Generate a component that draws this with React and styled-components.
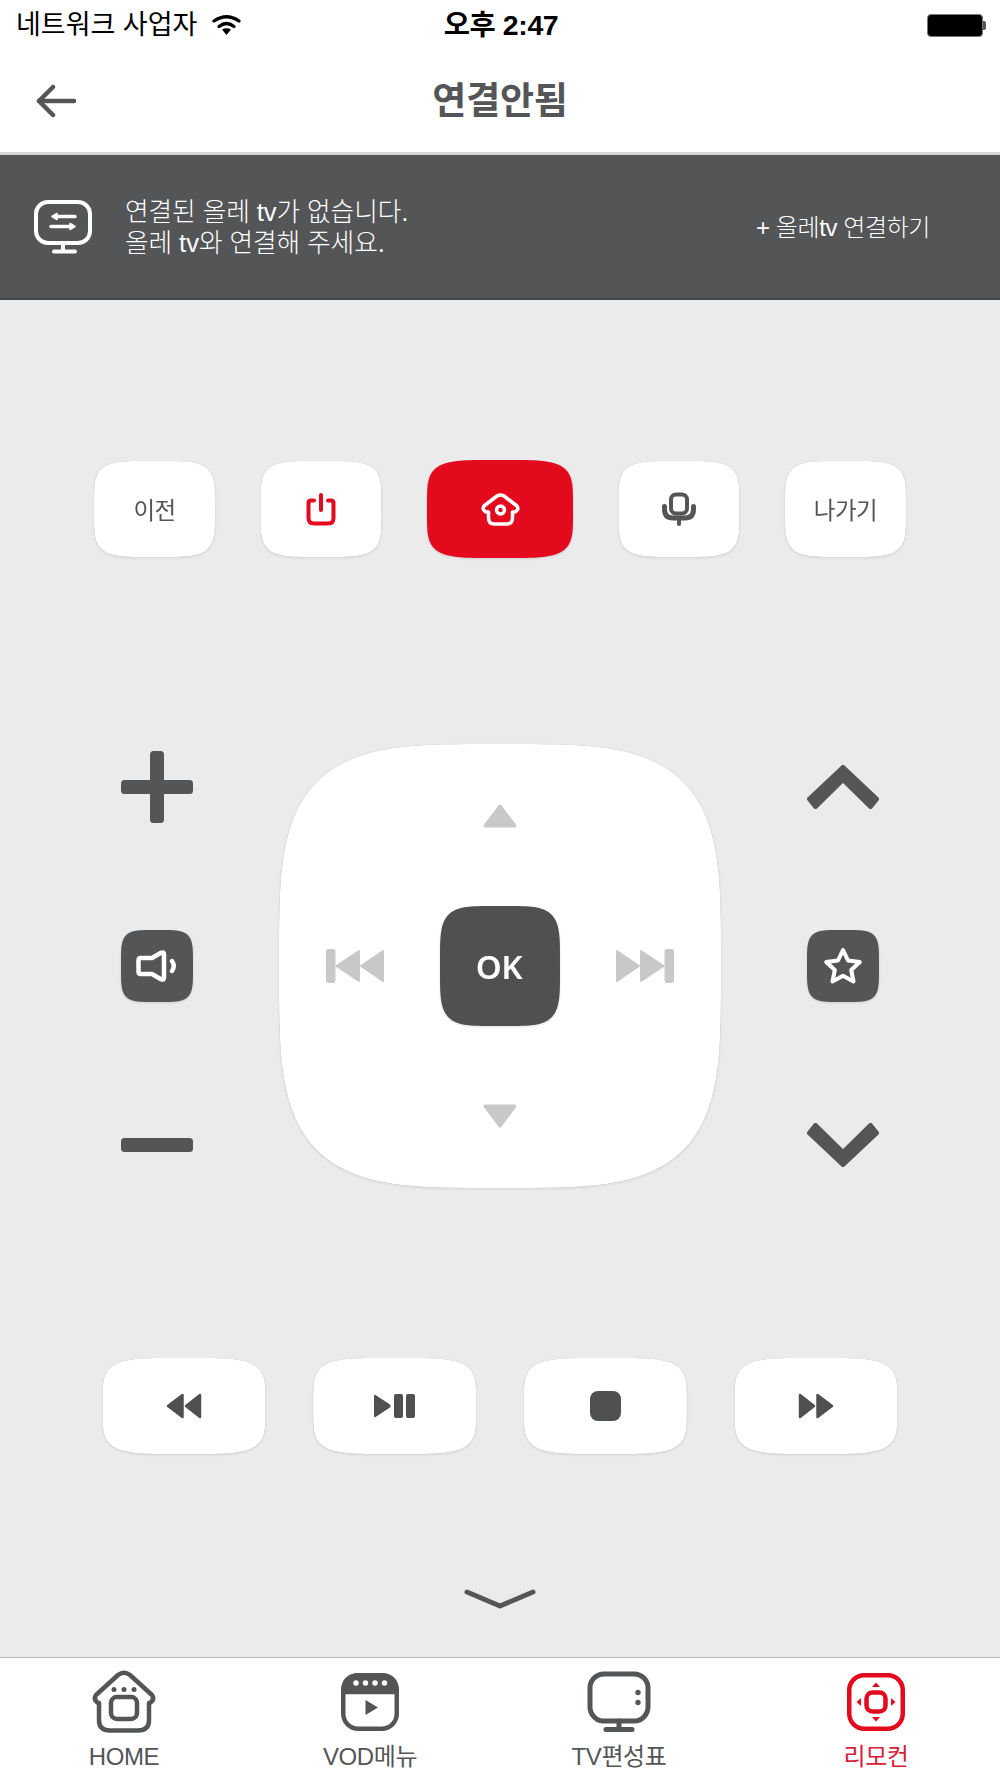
import React from 'react';
import styled, { createGlobalStyle } from 'styled-components';

const DARK = '#545557';
const RED = '#e30a1e';
const GRAY = '#c7c8ca';

const GlobalStyle = createGlobalStyle`
  html, body {
    margin: 0;
    padding: 0;
    background: #ebebeb;
  }
  body {
    font-family: "Liberation Sans", "Noto Sans CJK KR", sans-serif;
  }
`;

// superellipse outline, used as the clip of every soft-cornered key
const squirclePath = (w, h, n) => {
  const points = [];
  for (let i = 0; i < 240; i++) {
    const t = (i / 240) * Math.PI * 2;
    const c = Math.cos(t);
    const s = Math.sin(t);
    const x = w / 2 + (w / 2) * Math.sign(c) * Math.pow(Math.abs(c), 2 / n);
    const y = h / 2 + (h / 2) * Math.sign(s) * Math.pow(Math.abs(s), 2 / n);
    points.push(`${x.toFixed(2)} ${y.toFixed(2)}`);
  }
  return `M${points.join('L')}Z`;
};

const Page = styled.div`
  width: 1000px;
  height: 1778px;
  display: flex;
  flex-direction: column;
  overflow: hidden;
  background: #ebebeb;
`;

const StatusBar = styled.div`
  height: 50px;
  flex: none;
  display: grid;
  grid-template-columns: 1fr auto 1fr;
  align-items: center;
  padding: 0 14px 0 16px;
  background: #fff;
  color: #000;
`;

const Carrier = styled.div`
  display: flex;
  align-items: center;
  gap: 15px;
  font-size: 27px;
  line-height: 32px;
  margin-bottom: 1px;
`;

const Clock = styled.div`
  font-size: 28.5px;
  line-height: 32px;
  font-weight: 700;
  letter-spacing: -0.4px;
  margin-bottom: 1px;
`;

const Battery = styled.div`
  justify-self: end;
  display: flex;
  align-items: center;
`;

const BatteryBody = styled.div`
  width: 54px;
  height: 21px;
  background: #000;
  border: 1.5px solid #777;
  border-radius: 4px;
`;

const BatteryTip = styled.div`
  width: 3px;
  height: 9px;
  background: #555;
  border-radius: 0 2px 2px 0;
`;

const Header = styled.header`
  height: 105px;
  flex: none;
  position: relative;
  display: flex;
  align-items: center;
  justify-content: center;
  box-sizing: border-box;
  padding-bottom: 6px;
  background: #fff;
  border-bottom: 3px solid #d6d6d6;
`;

const BackButton = styled.div`
  position: absolute;
  left: 36px;
  top: 34px;
  line-height: 0;
`;

const Title = styled.h1`
  margin: 0;
  font-size: 37px;
  font-weight: 700;
  color: ${DARK};
  letter-spacing: -0.2px;
`;

const Banner = styled.section`
  height: 145px;
  flex: none;
  box-sizing: border-box;
  display: flex;
  align-items: center;
  padding: 0 70px 0 34px;
  background: ${DARK};
  border-bottom: 2px solid #434446;
  color: #fff;
`;

const BannerMessage = styled.div`
  margin-left: 33px;
  padding-top: 2px;
  font-size: 25.7px;
  line-height: 31px;
  font-weight: 300;
  letter-spacing: -0.1px;
`;

const ConnectLink = styled.div`
  margin-left: auto;
  margin-bottom: 2px;
  font-size: 24px;
  font-weight: 300;
  letter-spacing: -0.4px;
`;

const Main = styled.main`
  flex: 1;
  display: flex;
  flex-direction: column;
  align-items: center;
  padding-top: 160px;
  background: #ebebeb;
`;

const TopRow = styled.div`
  display: flex;
  align-items: center;
  justify-content: center;
  gap: 45.5px;
`;

const Raised = styled.div`
  flex: none;
  filter: ${(p) =>
    p.$outline
      ? 'drop-shadow(0 0 0.7px rgba(0,0,0,.3)) drop-shadow(0 1px 1px rgba(0,0,0,.1))'
      : 'drop-shadow(0 1px 1px rgba(0,0,0,.12))'};
`;

const Face = styled.button`
  display: flex;
  align-items: center;
  justify-content: center;
  width: ${(p) => p.$w}px;
  height: ${(p) => p.$h}px;
  padding: 0;
  border: 0;
  background: ${(p) => p.$bg};
  color: ${(p) => p.$fg};
  font-family: inherit;
  clip-path: path('${(p) => squirclePath(p.$w, p.$h, p.$n)}');
`;

const KeyLabel = styled.span`
  font-size: 23.5px;
  letter-spacing: -0.5px;
`;

const OkLabel = styled.span`
  font-family: "Noto Sans", sans-serif;
  font-size: 33px;
  font-weight: 600;
  letter-spacing: -0.5px;
  margin-right: 2px;
`;

const Key = ({ w, h, n = 4.5, bg = '#fff', fg = DARK, children }) => (
  <Raised $outline={bg === '#fff'}>
    <Face $w={w} $h={h} $n={n} $bg={bg} $fg={fg}>
      {children}
    </Face>
  </Raised>
);

const Middle = styled.div`
  margin-top: 186px;
  display: grid;
  grid-template-columns: 72px 442px 72px;
  column-gap: 86px;
  height: 444px;
`;

const SideColumn = styled.div`
  display: flex;
  flex-direction: column;
  justify-content: space-between;
  padding: 7px 0;
`;

const SideCell = styled.div`
  width: 72px;
  height: 72px;
  display: flex;
  align-items: center;
  justify-content: center;
`;

const PadGrid = styled.div`
  display: grid;
  width: 100%;
  height: 100%;
  grid-template-columns: 1fr 120px 1fr;
  grid-template-rows: 1fr 120px 1fr;
`;

const PadArrow = styled.div`
  grid-column: 2;
  grid-row: ${(p) => (p.$down ? 3 : 1)};
  justify-self: center;
  align-self: ${(p) => (p.$down ? 'start' : 'end')};
  margin: ${(p) => (p.$down ? '78px 0 0' : '0 0 78px')};
  line-height: 0;
`;

const PadSkip = styled.div`
  grid-row: 2;
  grid-column: ${(p) => (p.$next ? 3 : 1)};
  align-self: center;
  justify-self: ${(p) => (p.$next ? 'start' : 'end')};
  margin: ${(p) => (p.$next ? '0 0 0 56px' : '0 56px 0 0')};
  line-height: 0;
`;

const PadCenter = styled.div`
  grid-row: 2;
  grid-column: 2;
`;

const MediaRow = styled.div`
  margin-top: 170px;
  display: flex;
  gap: 47.67px;
`;

const Collapse = styled.div`
  margin-top: 135px;
  line-height: 0;
`;

const TabBar = styled.nav`
  height: 121px;
  flex: none;
  box-sizing: border-box;
  display: grid;
  grid-template-columns: 248px 244px 254px 254px;
  padding-top: 12px;
  background: #fff;
  border-top: 1px solid #b9b9b9;
`;

const Tab = styled.div`
  display: flex;
  flex-direction: column;
  align-items: center;
  color: ${(p) => (p.$active ? '#d8223a' : DARK)};
  &:last-child {
    padding-left: 6px;
  }
`;

const TabIcon = styled.div`
  height: 64px;
  display: flex;
  align-items: center;
  justify-content: center;
`;

const TabLabel = styled.div`
  margin-top: 9px;
  font-size: 24px;
  line-height: 28px;
  letter-spacing: -0.4px;
`;

// ---- drawings ----

const WifiIcon = () => (
  <svg width="29" height="22" viewBox="0 0 29 22" fill="none" stroke="#000" strokeWidth="3.2" strokeLinecap="round">
    <path d="M2 7Q14.500-1.500 27 7" />
    <path d="M7 12.500Q14.500 6.500 22 12.500" />
    <path d="M10 15.500Q14.500 13 19 15.500L14.500 21Z" fill="#000" stroke="none" />
  </svg>
);

const BackIcon = () => (
  <svg width="40" height="34" viewBox="0 0 40 34" fill="none" stroke={DARK} strokeWidth="4.5" strokeLinecap="round" strokeLinejoin="round">
    <path d="M3 17H38" />
    <path d="M17 3L3 17L17 31" />
  </svg>
);

const LinkTvIcon = () => (
  <svg width="58" height="54" viewBox="0 0 58 54" fill="none" stroke="#fff" strokeWidth="4" strokeLinecap="round">
    <rect x="2" y="2" width="54" height="41" rx="12" />
    <path d="M29 44V51" />
    <path d="M20 51.500H41" />
    <path d="M20 16.500H41" strokeWidth="3.500" />
    <path d="M18 16.500L23 13.500V19.500Z" fill="#fff" strokeWidth="1.500" strokeLinejoin="round" />
    <path d="M17 26.500H38" strokeWidth="3.500" />
    <path d="M41 26.500L36 23.500V29.500Z" fill="#fff" strokeWidth="1.500" strokeLinejoin="round" />
  </svg>
);

const PowerIcon = () => (
  <svg width="30" height="33" viewBox="0 0 30 33" fill="none" stroke={RED} strokeWidth="4" strokeLinecap="round">
    <path d="M8 7.500H5Q2.500 7.500 2.500 10V25Q2.500 30.500 8 30.500H22Q27.500 30.500 27.500 25V10Q27.500 7.500 25 7.500H22" />
    <path d="M15 2V17" />
  </svg>
);

const HomeKeyIcon = () => (
  <svg width="41" height="33" viewBox="0 0 41 33" fill="none" stroke="#fff" strokeWidth="3.500" strokeLinejoin="round">
    <path d="M8.500 19V25Q8.500 31 14.500 31H26.500Q32.500 31 32.500 25V19H35Q39.500 16.500 37 13L24 3Q20.500 0.800 17 3L4 13Q1.500 16.500 6 19Z" />
    <circle cx="20.500" cy="17" r="4" strokeWidth="3.500" />
  </svg>
);

const MicIcon = () => (
  <svg width="34" height="34" viewBox="0 0 34 34" fill="none" stroke={DARK} strokeWidth="4" strokeLinecap="round">
    <rect x="9" y="2.500" width="16" height="19" rx="5" />
    <path d="M2.500 14.500V17Q2.500 26 11 26H23Q31.500 26 31.500 17V14.500" strokeWidth="5" />
    <path d="M17 27V32" />
  </svg>
);

const PlusIcon = () => (
  <svg width="72" height="72" viewBox="0 0 72 72" fill={DARK}>
    <rect x="0" y="29" width="72" height="14" rx="3.500" />
    <rect x="29" y="0" width="14" height="72" rx="3.500" />
  </svg>
);

const MinusIcon = () => (
  <svg width="72" height="14" viewBox="0 0 72 14" fill={DARK}>
    <rect width="72" height="14" rx="3.500" />
  </svg>
);

const ChevronIcon = ({ down }) => (
  <svg width="72" height="44" viewBox="0 0 72 44" fill={DARK} stroke={DARK} strokeWidth="5" strokeLinejoin="round">
    <g transform={down ? 'translate(0 44) scale(1 -1)' : undefined}>
      <path d="M36 2.500L69.500 34L63.500 41.500L36 14.500L8.500 41.500L2.500 34Z" />
    </g>
  </svg>
);

const SpeakerIcon = () => (
  <svg width="42" height="32" viewBox="0 0 42 32" fill="none" stroke="#fff" strokeWidth="4.5" strokeLinejoin="round" strokeLinecap="round">
    <path d="M4.500 8H16L25 2.800Q28 1.500 28 4.500V27.500Q28 30.500 25 29.200L16 24H4.500Q2.500 24 2.500 21.500V10.500Q2.500 8 4.500 8Z" />
    <path d="M36 11Q39.500 16 36 21" strokeWidth="4.5" />
  </svg>
);

const StarIcon = () => (
  <svg width="40" height="38" viewBox="0 0 40 38" fill="none" stroke="#fff" strokeWidth="4" strokeLinejoin="round">
    <path d="M20 3L25 13.500L36.800 15L28.200 23L30.500 34.500L20 28.800L9.500 34.500L11.800 23L3.200 15L15 13.500Z" />
  </svg>
);

const TriangleIcon = ({ down }) => (
  <svg width="34" height="24" viewBox="0 0 34 24" fill={GRAY} stroke={GRAY} strokeWidth="3" strokeLinejoin="round">
    <path d={down ? 'M2 2H32L17 22Z' : 'M17 2L32 22H2Z'} />
  </svg>
);

const SkipIcon = ({ flip }) => (
  <svg width="58" height="34" viewBox="0 0 58 34" fill={GRAY} stroke={GRAY} strokeWidth="2" strokeLinejoin="round">
    <g transform={flip ? 'translate(58 0) scale(-1 1)' : undefined}>
      <rect x="1" y="1" width="7.500" height="32" rx="1.500" />
      <path d="M10.500 17L33 2V32Z" />
      <path d="M35 17L57 2V32Z" />
    </g>
  </svg>
);

const RewindIcon = ({ flip }) => (
  <svg width="36" height="26" viewBox="0 0 36 26" fill="#4f5052" stroke="#4f5052" strokeWidth="2.500" strokeLinejoin="round">
    <g transform={flip ? 'translate(36 0) scale(-1 1)' : undefined}>
      <path d="M2 13L16.500 2V24Z" />
      <path d="M20 13L34 2V24Z" />
    </g>
  </svg>
);

const PlayPauseIcon = () => (
  <svg width="41" height="26" viewBox="0 0 41 26" fill="#4f5052">
    <path d="M1.500 2L16 11.500Q17.500 13 16 14.500L1.500 24Q0 25 0 23V3Q0 1 1.500 2Z" />
    <rect x="20" y="1" width="9" height="24" rx="2" />
    <rect x="32" y="1" width="9" height="24" rx="2" />
  </svg>
);

const StopIcon = () => (
  <svg width="31" height="30" viewBox="0 0 31 30" fill="#4f5052">
    <rect width="31" height="30" rx="8" />
  </svg>
);

const CollapseIcon = () => (
  <svg width="72" height="20" viewBox="0 0 72 20" fill="none" stroke={DARK} strokeWidth="5" strokeLinecap="round" strokeLinejoin="round">
    <path d="M3 3L36 17L69 3" />
  </svg>
);

const HomeTabIcon = () => (
  <svg width="64" height="64" viewBox="0 0 64 64" fill="none" stroke={DARK} strokeWidth="4.500" strokeLinejoin="round">
    <path d="M7 33V50Q7 60.500 18 60.500H46Q57 60.500 57 50V33H58Q63 29.500 60 25L38 5Q32 0.500 26 5L4 25Q1 29.500 6 33Z" />
    <rect x="19" y="27" width="26" height="22" rx="6" strokeWidth="4.500" />
    <g fill={DARK} stroke="none">
      <circle cx="22" cy="19.500" r="2.500" />
      <circle cx="32" cy="19.500" r="2.500" />
      <circle cx="42" cy="19.500" r="2.500" />
    </g>
  </svg>
);

const VodTabIcon = () => (
  <svg width="58" height="58" viewBox="0 0 58 58" fill="none" stroke={DARK} strokeWidth="4.500">
    <path d="M2.500 19V18Q2.500 2.500 18 2.500H40Q55.500 2.500 55.500 18V19Z" fill={DARK} />
    <rect x="2.250" y="2.250" width="53.500" height="53.500" rx="15" />
    <g fill="#fff" stroke="none">
      <circle cx="15" cy="10" r="2.700" />
      <circle cx="24.500" cy="10" r="2.700" />
      <circle cx="34" cy="10" r="2.700" />
      <circle cx="43.500" cy="10" r="2.700" />
    </g>
    <path d="M24.500 27V42L37 34.500Z" fill={DARK} stroke="none" />
  </svg>
);

const TvTabIcon = () => (
  <svg width="64" height="62" viewBox="0 0 64 62" fill="none" stroke={DARK} strokeWidth="5" strokeLinecap="round">
    <rect x="3" y="3" width="58" height="47" rx="14" />
    <path d="M32 50V58" />
    <path d="M19 58.500H45" />
    <g fill={DARK} stroke="none">
      <circle cx="51" cy="21.500" r="2.700" />
      <circle cx="51" cy="31.500" r="2.700" />
    </g>
  </svg>
);

const RemoteTabIcon = () => (
  <svg width="58" height="58" viewBox="0 0 58 58" fill="none" stroke={RED} strokeWidth="4.500">
    <rect x="2.250" y="2.250" width="53.500" height="53.500" rx="15" />
    <rect x="19.500" y="19.500" width="19" height="19" rx="6" />
    <g fill={RED} stroke="none">
      <path d="M29 9.500L33 14H25Z" />
      <path d="M29 48.500L33 44H25Z" />
      <path d="M9.500 29L14 25V33Z" />
      <path d="M48.500 29L44 25V33Z" />
    </g>
  </svg>
);

const tabs = [
  { label: 'HOME', icon: <HomeTabIcon /> },
  { label: 'VOD메뉴', icon: <VodTabIcon /> },
  { label: 'TV편성표', icon: <TvTabIcon /> },
  { label: '리모컨', icon: <RemoteTabIcon />, active: true },
];

const App = () => (
  <Page>
    <GlobalStyle />
    <StatusBar>
      <Carrier>
        네트워크 사업자
        <WifiIcon />
      </Carrier>
      <Clock>오후 2:47</Clock>
      <Battery>
        <BatteryBody />
        <BatteryTip />
      </Battery>
    </StatusBar>

    <Header>
      <BackButton>
        <BackIcon />
      </BackButton>
      <Title>연결안됨</Title>
    </Header>

    <Banner>
      <LinkTvIcon />
      <BannerMessage>
        연결된 올레 tv가 없습니다.
        <br />
        올레 tv와 연결해 주세요.
      </BannerMessage>
      <ConnectLink>+ 올레tv 연결하기</ConnectLink>
    </Banner>

    <Main>
      <TopRow>
        <Key w={121} h={96}>
          <KeyLabel>이전</KeyLabel>
        </Key>
        <Key w={121} h={96}>
          <PowerIcon />
        </Key>
        <Key w={146} h={98} bg={RED}>
          <HomeKeyIcon />
        </Key>
        <Key w={121} h={96}>
          <MicIcon />
        </Key>
        <Key w={121} h={96}>
          <KeyLabel>나가기</KeyLabel>
        </Key>
      </TopRow>

      <Middle>
        <SideColumn>
          <SideCell>
            <PlusIcon />
          </SideCell>
          <Key w={72} h={72} bg={DARK} fg="#fff">
            <SpeakerIcon />
          </Key>
          <SideCell>
            <MinusIcon />
          </SideCell>
        </SideColumn>

        <Key w={442} h={444} n={3.7}>
          <PadGrid>
            <PadArrow>
              <TriangleIcon />
            </PadArrow>
            <PadSkip>
              <SkipIcon />
            </PadSkip>
            <PadCenter>
              <Key w={120} h={120} n={4.5} bg="#4f5052" fg="#fff">
                <OkLabel>OK</OkLabel>
              </Key>
            </PadCenter>
            <PadSkip $next>
              <SkipIcon flip />
            </PadSkip>
            <PadArrow $down>
              <TriangleIcon down />
            </PadArrow>
          </PadGrid>
        </Key>

        <SideColumn>
          <SideCell>
            <ChevronIcon />
          </SideCell>
          <Key w={72} h={72} bg={DARK} fg="#fff">
            <StarIcon />
          </Key>
          <SideCell>
            <ChevronIcon down />
          </SideCell>
        </SideColumn>
      </Middle>

      <MediaRow>
        <Key w={163} h={96}>
          <RewindIcon />
        </Key>
        <Key w={163} h={96}>
          <PlayPauseIcon />
        </Key>
        <Key w={163} h={96}>
          <StopIcon />
        </Key>
        <Key w={163} h={96}>
          <RewindIcon flip />
        </Key>
      </MediaRow>

      <Collapse>
        <CollapseIcon />
      </Collapse>
    </Main>

    <TabBar>
      {tabs.map((tab) => (
        <Tab key={tab.label} $active={tab.active}>
          <TabIcon>{tab.icon}</TabIcon>
          <TabLabel>{tab.label}</TabLabel>
        </Tab>
      ))}
    </TabBar>
  </Page>
);

export default App;
